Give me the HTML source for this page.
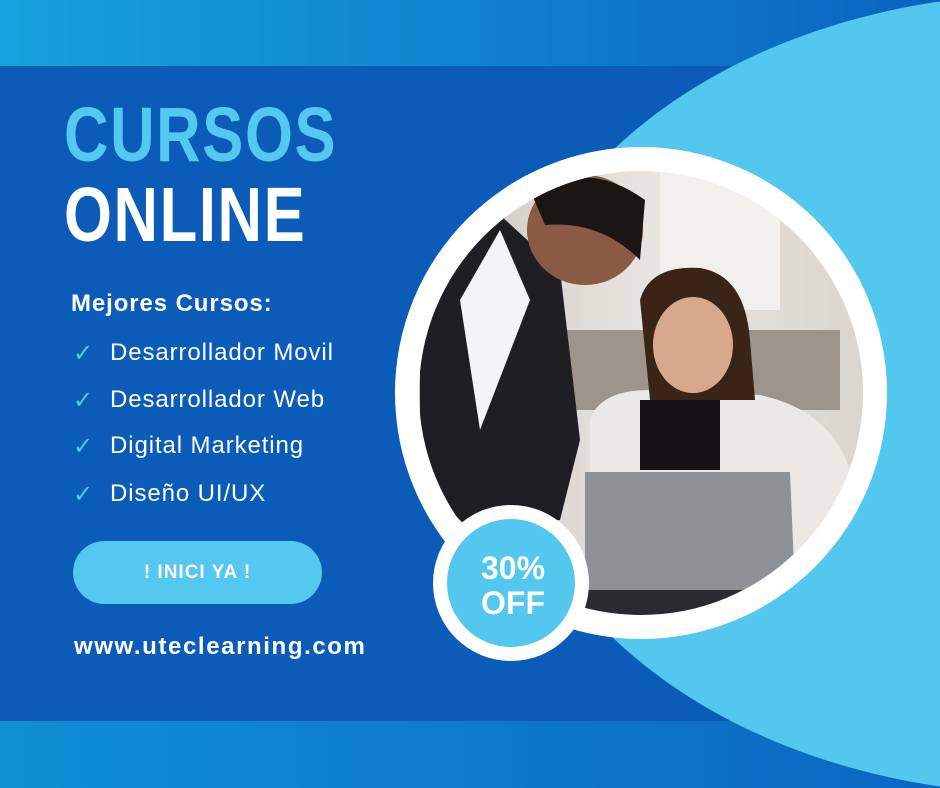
<!DOCTYPE html>
<html><head><meta charset="utf-8"><style>
body{margin:0}
#c{position:relative;width:940px;height:788px;overflow:hidden;background:#0b5cb9;font-family:"Liberation Sans",sans-serif}
.t{position:absolute;left:0;top:0;width:940px;height:66px;background:linear-gradient(90deg,#15a2dd,#0b63c0)}
.b{position:absolute;left:0;top:721px;width:940px;height:67px;background:linear-gradient(90deg,#0f90d5,#0b66c2)}
.h{position:absolute;left:64px;font-weight:bold;font-size:77px;transform:scaleX(.8);transform-origin:left;letter-spacing:2px}
.li{position:absolute;left:110px;color:#fff;font-size:24px;letter-spacing:.9px}
.ck{position:absolute;left:73px;color:#55c8ef;font-size:24px}
</style></head><body><div id="c">
<div class="t"></div><div class="b"></div>
<svg width="940" height="788" style="position:absolute;left:0;top:0">
<defs><clipPath id="p"><circle cx="641" cy="393" r="222"/></clipPath>
<linearGradient id="bg" x1="0" x2="1"><stop offset="0" stop-color="#c9c3bd"/><stop offset=".5" stop-color="#e8e4df"/><stop offset="1" stop-color="#d8d3cc"/></linearGradient></defs>
<ellipse cx="1045" cy="394" rx="545" ry="400" fill="#53c7ed"/>
<circle cx="641" cy="393" r="246" fill="#fff"/>
<g clip-path="url(#p)">
<rect x="400" y="160" width="500" height="470" fill="url(#bg)"/>
<rect x="660" y="170" width="120" height="140" fill="#f2f0ec"/>
<rect x="540" y="330" width="300" height="80" fill="#9d958c"/>
<path d="M420 250 L500 215 L560 270 L580 440 L560 520 L470 530 L420 480Z" fill="#1f1e22"/>
<path d="M500 230 L530 300 L480 430 L460 300Z" fill="#f4f4f6"/>
<ellipse cx="585" cy="230" rx="58" ry="55" fill="#8a5a44"/>
<path d="M530 190 Q590 160 645 200 L640 260 Q600 220 545 225Z" fill="#1b1612"/>
<path d="M590 420 Q600 390 650 390 L760 395 Q830 410 850 470 L850 620 L590 620Z" fill="#ece9e4"/>
<path d="M640 400 L720 400 L720 470 L640 470Z" fill="#141215"/>
<path d="M640 300 Q650 265 700 268 Q745 275 750 340 L755 400 L650 400Z" fill="#3a2418"/>
<ellipse cx="693" cy="345" rx="40" ry="48" fill="#d8a88c"/>
<path d="M585 472 L790 472 L795 590 L585 590Z" fill="#8e9296"/>
<rect x="560" y="590" width="260" height="30" fill="#2a2b30"/>
</g>
<circle cx="511" cy="583" r="78" fill="#fff"/>
<circle cx="511" cy="583" r="64" fill="#53c7ed"/>
<text x="513" y="579" text-anchor="middle" fill="#fff" font-weight="bold" font-size="32" font-family="Liberation Sans">30%</text>
<text x="513" y="614" text-anchor="middle" fill="#fff" font-weight="bold" font-size="32" font-family="Liberation Sans">OFF</text>
</svg>
<div class="h" style="top:91px;color:#55c8ef">CURSOS</div>
<div class="h" style="top:171px;color:#fff">ONLINE</div>
<div style="position:absolute;left:71px;top:290px;color:#fff;font-weight:bold;font-size:24px;letter-spacing:.9px">Mejores Cursos:</div>
<div class="ck" style="top:339px">✓</div><div class="li" style="top:339px">Desarrollador Movil</div>
<div class="ck" style="top:386px">✓</div><div class="li" style="top:386px">Desarrollador Web</div>
<div class="ck" style="top:432px">✓</div><div class="li" style="top:432px">Digital Marketing</div>
<div class="ck" style="top:480px">✓</div><div class="li" style="top:480px">Diseño UI/UX</div>
<div style="position:absolute;left:73px;top:541px;width:249px;height:63px;border-radius:32px;background:#55c8ef;color:#fff;font-weight:bold;font-size:19px;letter-spacing:1px;text-align:center;line-height:63px">! INICI YA !</div>
<div style="position:absolute;left:74px;top:633px;color:#fff;font-weight:bold;font-size:24px;letter-spacing:1.6px">www.uteclearning.com</div>
</div></body></html>
